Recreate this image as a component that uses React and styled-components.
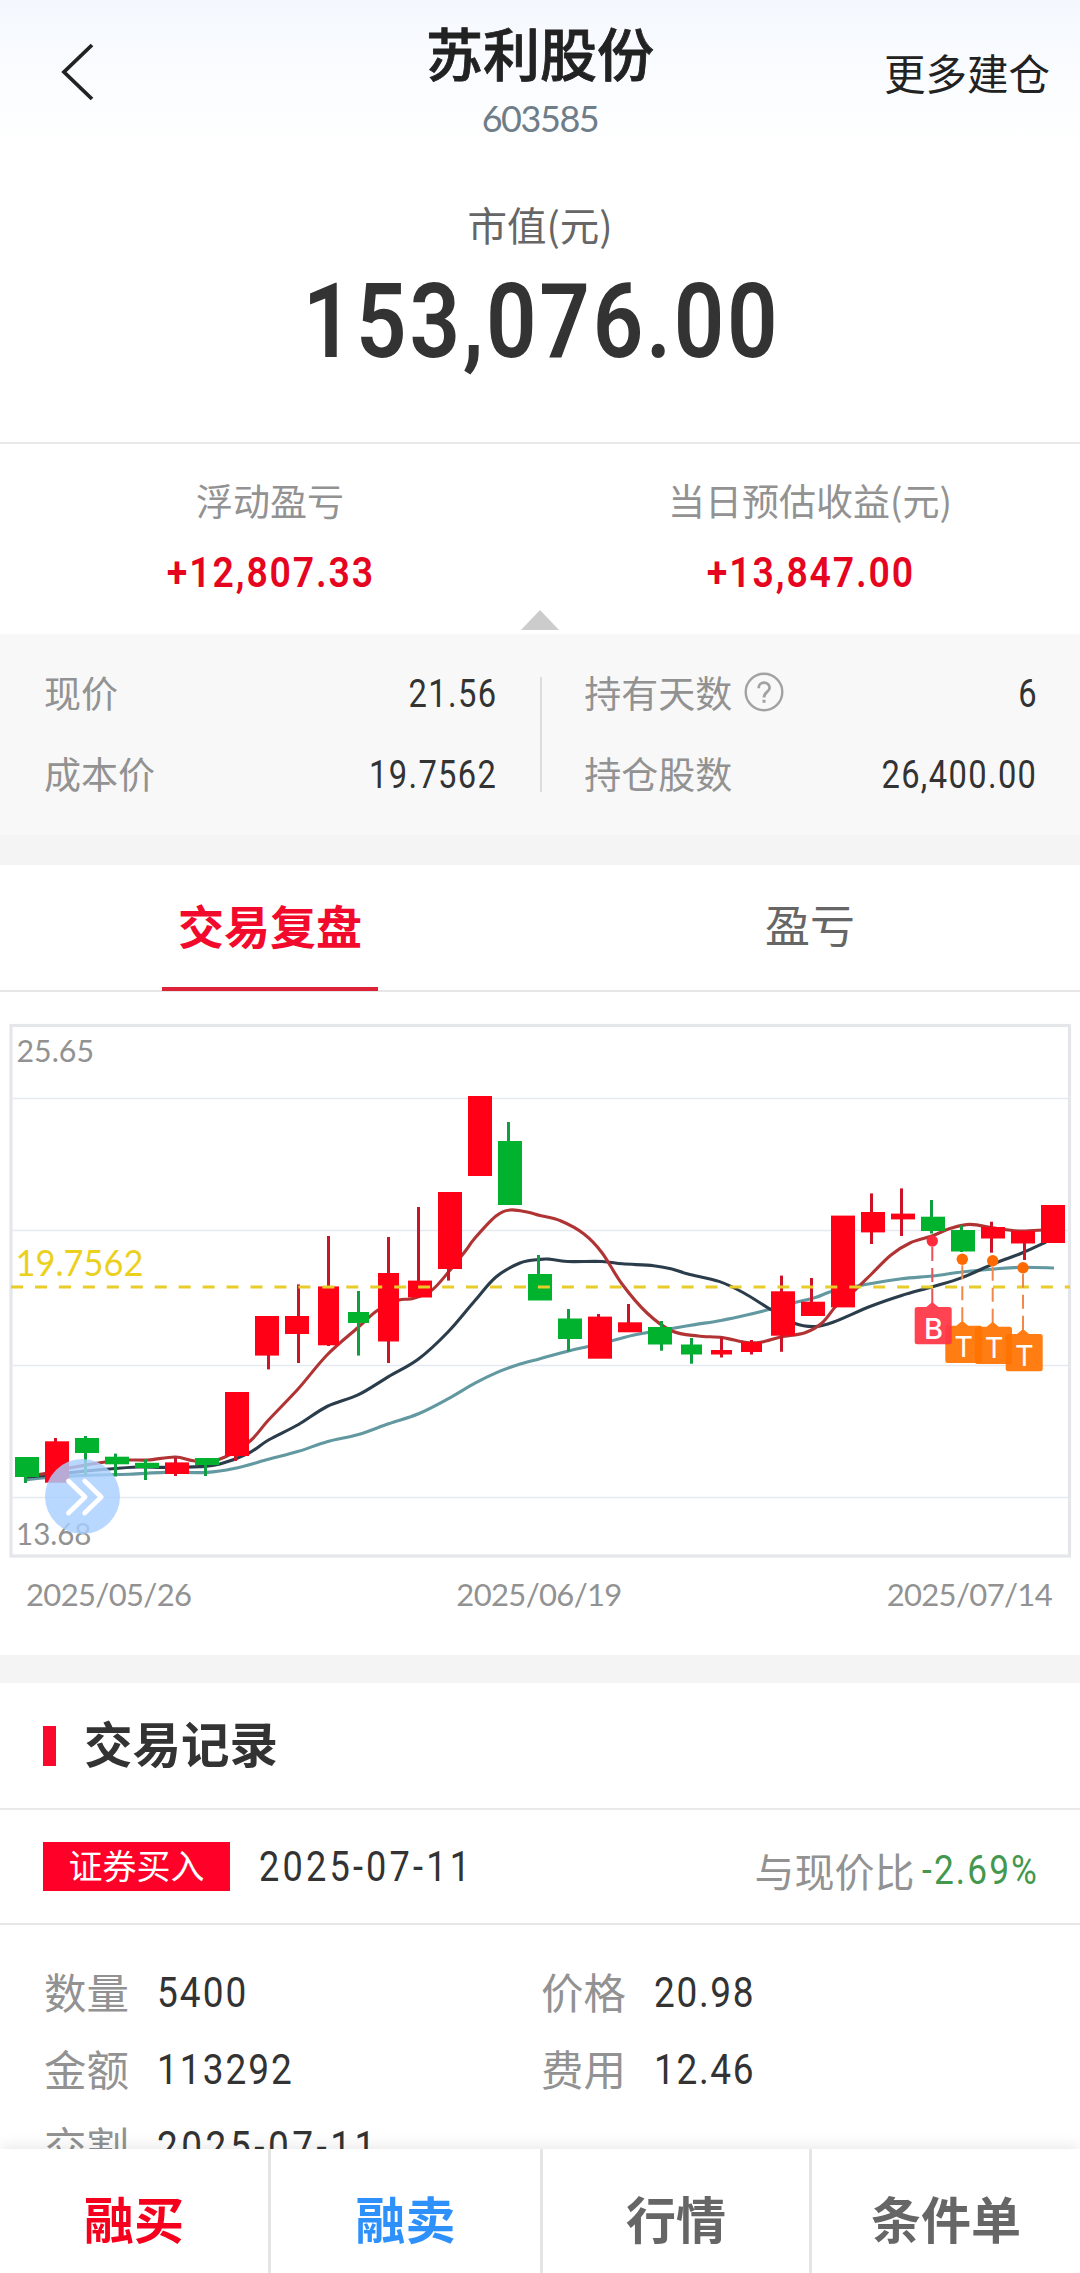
import React from 'react';
import styled, { createGlobalStyle } from 'styled-components';

const GlobalStyle = createGlobalStyle`
  * { box-sizing: border-box; }
  body {
    margin: 0;
    background: #fff;
    font-family: 'Noto Sans CJK SC', sans-serif;
    color: #333;
  }
`;

const Page = styled.main`
  display: flex;
  flex-direction: column;
  width: 1080px;
  height: 2273px;
  overflow: hidden;
  background: #fff;
`;

/* Condensed figures: narrowed glyphs with open tracking keep a DIN-like look. */
const Num = styled.span`
  display: inline-block;
  margin-right: ${(p) => -(p.$spacing ?? 0.042)}em;
  font-family: 'Roboto', 'Noto Sans CJK SC', sans-serif;
  font-size: ${(p) => p.$size || 38}px;
  font-weight: ${(p) => p.$weight || 400};
  line-height: 1;
  letter-spacing: ${(p) => p.$spacing ?? 0.042}em;
  color: ${(p) => p.$color || '#333'};
  white-space: nowrap;
  transform: scaleX(${(p) => p.$scale || 0.86});
  transform-origin: ${(p) => p.$origin || 'center'} center;
`;

/* ---------- header ---------- */
const Header = styled.header`
  display: grid;
  grid-template-columns: 300px 1fr 300px;
  height: 150px;
  background: linear-gradient(#f4f8fe, #fafcff 50%, #fff);
`;

const Back = styled.button`
  display: flex;
  align-items: center;
  height: 144px;
  padding: 0 0 0 58px;
  border: 0;
  background: none;
`;

const TitleBlock = styled.div`
  display: flex;
  flex-direction: column;
  align-items: center;
  padding-top: 20px;
`;

const Title = styled.h1`
  margin: 0 0 18px;
  font-size: 57px;
  font-weight: 500;
  line-height: 62px;
  color: #222;
  -webkit-text-stroke: 0.8px #222;
`;

const Code = styled.span`
  font-family: 'Lato', sans-serif;
  font-size: 36px;
  line-height: 36px;
  letter-spacing: -0.04em;
  color: #6f7d88;
`;

const More = styled.a`
  justify-self: end;
  padding: 42px 30px 0 0;
  font-size: 41.5px;
  line-height: 60px;
  color: #222;
`;

/* ---------- market value ---------- */
const Value = styled.section`
  display: flex;
  flex-direction: column;
  align-items: center;
  height: 294px;
  padding-top: 49px;
  border-bottom: 2px solid #e9e9e9;
`;

const ValueLabel = styled.div`
  margin-bottom: 21px;
  font-size: 39.5px;
  line-height: 50px;
  color: #666;
`;

const Profit = styled.section`
  position: relative;
  display: grid;
  grid-template-columns: 1fr 1fr;
  height: 190px;
  padding-top: 31px;
`;

const ProfitCell = styled.div`
  display: flex;
  flex-direction: column;
  align-items: center;
  gap: 27px;
  font-size: 37px;
  line-height: 50px;
  color: #929292;
`;

const Pointer = styled.i`
  position: absolute;
  left: 521px;
  bottom: 4px;
  border: 19px solid transparent;
  border-top: 0;
  border-bottom: 20px solid #ccc;
`;

/* ---------- position details ---------- */
const Details = styled.section`
  display: flex;
  height: 201px;
  padding: 33px 44px 0;
  background: #f8f8f8;
`;

const DetailColumn = styled.div`
  display: flex;
  flex-direction: column;
  gap: 31px;
  width: ${(p) => p.$width}px;
`;

const DetailRow = styled.div`
  display: flex;
  align-items: center;
  justify-content: space-between;
  height: 50px;
  font-size: 37px;
  line-height: 50px;
  color: #929292;

  > ${Num} {
    padding-top: 4px;
  }
`;

const DetailLabel = styled.span`
  display: flex;
  align-items: center;
  gap: 12px;
`;

const DetailRule = styled.div`
  width: 2.5px;
  height: 115px;
  margin: 10px 42px 0 44px;
  background: #ddd;
`;

const Band = styled.div`
  height: ${(p) => p.$height}px;
  background: #f4f4f4;
`;

/* ---------- tabs ---------- */
const Tabs = styled.nav`
  display: grid;
  grid-template-columns: 1fr 1fr;
  height: 127px;
  border-bottom: 2px solid #e6e6e6;
`;

const Tab = styled.div`
  display: flex;
  justify-content: center;
  justify-self: center;
  width: 216px;
  height: 126px;
  padding-top: 26px;
  font-size: ${(p) => (p.$active ? 46 : 45)}px;
  font-weight: ${(p) => (p.$active ? 700 : 400)};
  line-height: 66px;
  color: ${(p) => (p.$active ? '#f20a2c' : '#666')};
  border-bottom: 4px solid ${(p) => (p.$active ? '#dc2338' : 'transparent')};
`;

/* ---------- chart ---------- */
const ChartArea = styled.section`
  position: relative;
  height: 663px;
`;

const ChartSvg = styled.svg`
  display: block;
  width: 1080px;
  height: 566px;
`;

const AxisText = styled.text`
  font-family: 'Lato', sans-serif;
  font-size: ${(p) => p.$size || 31}px;
  fill: ${(p) => p.$fill || '#929292'};
`;

const FlagText = styled.text`
  font-family: 'Inter', sans-serif;
  font-size: 29px;
  font-weight: ${(p) => p.$weight};
  fill: #fff;
  text-anchor: middle;
`;

const Dates = styled.div`
  display: flex;
  justify-content: space-between;
  padding: 14px 28px 0 26px;
  font-family: 'Lato', sans-serif;
  font-size: 31px;
  line-height: 44px;
  letter-spacing: -0.65px;
  color: #929292;
`;

const Expand = styled.button`
  position: absolute;
  left: 45px;
  top: 467px;
  width: 75px;
  height: 75px;
  padding: 0;
  border: 0;
  border-radius: 50%;
  background: rgba(169, 207, 255, 0.82);
`;

/* ---------- records ---------- */
const RecordHead = styled.div`
  display: flex;
  align-items: center;
  gap: 28px;
  height: 127px;
  padding: 0 43px;
  border-bottom: 2px solid #e9e9e9;
`;

const RedBar = styled.i`
  width: 13px;
  height: 40px;
  background: #f90a2c;
`;

const RecordTitle = styled.h2`
  margin: 0 0 8px;
  font-size: 48.5px;
  font-weight: 700;
  line-height: 64px;
  color: #333;
`;

const RecordSummary = styled.div`
  display: flex;
  align-items: center;
  height: 115px;
  padding: 0 43px;
  border-bottom: 2px solid #e6e6e6;
`;

const Tag = styled.span`
  width: 187px;
  height: 49px;
  margin-right: 29px;
  background: #ff0029;
  color: #fff;
  font-size: 34px;
  line-height: 46px;
  text-align: center;
`;

const Compare = styled.span`
  display: flex;
  align-items: center;
  margin: 6px 0 0 auto;
  font-size: 40px;
  line-height: 56px;
  color: #929292;

  > ${Num} {
    margin-left: -11px;
    padding-top: 2px;
  }
`;

const RecordGrid = styled.div`
  display: grid;
  grid-template-columns: 497px 1fr;
  grid-auto-rows: 77.3px;
  flex: 1;
  min-height: 0;
  overflow: hidden;
  padding: 27px 44px 0;
`;

const Field = styled.div`
  display: flex;
  align-items: center;
  gap: 28px;
  font-size: 42.5px;
  line-height: 60px;
  color: #929292;

  > ${Num} {
    padding-top: 3px;
  }
`;

const Footer = styled.footer`
  position: relative;
  display: grid;
  grid-template-columns: 268px 272px 269px 271px;
  flex: none;
  height: 124px;
  background: #fff;
  box-shadow: 0 -3px 14px rgba(0, 0, 0, 0.09);
`;

const Action = styled.div`
  display: flex;
  justify-content: center;
  padding-top: 32px;
  font-size: 50px;
  font-weight: 700;
  line-height: 72px;
  color: ${(p) => p.$color || '#666'};
  border-left: ${(p) => (p.$first ? 0 : 3)}px solid #e5e5e5;
`;

/* Candle: body left, width, open/close edges, wick x, wick ends, rising flag. */
const CANDLES = [
  [15, 24, 1457, 1477, 25.5, 1457, 1483, 0],
  [45, 24, 1441.3, 1482.7, 55.5, 1438, 1482, 1],
  [75, 24, 1438, 1453, 85.5, 1436, 1475, 0],
  [105, 24, 1456.7, 1464.3, 115.5, 1453.6, 1476.5, 0],
  [135, 24, 1462.8, 1468, 145.5, 1459.3, 1480, 0],
  [165, 24, 1462.4, 1474, 175.5, 1458, 1476, 1],
  [195, 24, 1458, 1465, 205.5, 1458, 1476, 0],
  [225, 24, 1392, 1456, 235.5, 1392, 1461, 1],
  [255, 24, 1316, 1355.6, 268.5, 1316, 1369.4, 1],
  [285, 24, 1316, 1334, 298.5, 1284.4, 1363, 1],
  [318, 21, 1286.4, 1345.3, 328.5, 1236, 1346, 1],
  [348, 21, 1312, 1323, 358.5, 1291, 1355.6, 0],
  [378, 21, 1273, 1341.5, 388.5, 1237, 1363, 1],
  [408, 24, 1280.6, 1297.5, 418.5, 1207, 1297, 1],
  [438, 24, 1192, 1269, 448.5, 1192, 1280.6, 1],
  [468, 24, 1096, 1176, 480, 1096, 1176, 1],
  [498, 24, 1141, 1205, 508.5, 1122, 1205, 0],
  [528, 24, 1274, 1300.5, 538.5, 1255, 1300, 0],
  [558, 24, 1318.5, 1339, 568.5, 1309, 1351.4, 0],
  [588, 24, 1316.6, 1358.7, 598.5, 1314, 1358, 1],
  [618, 24, 1322.3, 1332.3, 628.5, 1304, 1332, 1],
  [648, 24, 1327, 1344.5, 661.5, 1321, 1350.7, 0],
  [681, 21, 1344.5, 1354.5, 691.5, 1338, 1363.7, 0],
  [711, 21, 1350, 1354.5, 721.5, 1337.6, 1357.5, 1],
  [741, 21, 1342, 1352, 751.5, 1340, 1354.5, 1],
  [771, 24, 1291.3, 1335.7, 781.5, 1275.6, 1351.8, 1],
  [801, 24, 1301.7, 1316, 811.5, 1278, 1316, 1],
  [831, 24, 1215.6, 1307.4, 843, 1216, 1307, 1],
  [861, 24, 1212, 1232.4, 871.5, 1193.4, 1244, 1],
  [891, 24, 1213.6, 1219.4, 901.5, 1188.4, 1236, 1],
  [921, 24, 1216.7, 1231, 931.5, 1200, 1233.5, 0],
  [951, 24, 1230, 1251.5, 961.5, 1225.5, 1252, 0],
  [981, 24, 1227, 1238.5, 991.5, 1221.7, 1252.7, 1],
  [1011, 24, 1231, 1243.5, 1024.5, 1231, 1260, 1],
  [1041, 24, 1205, 1243, 1053, 1205, 1243, 1],
];

const SHORT_MA = [25.5,1476,45,1473.5,69,1468,105,1462,129,1460,148,1460,175.5,1457,195,1461,220,1459,249,1442,268.5,1420,298.5,1388.5,327,1355,358.5,1327,378,1310,399,1300,413,1298.6,432,1290,448.5,1272,465,1251.5,475,1238,496,1216,510,1210,527,1212,540,1215.5,561,1221,584,1234,602,1252.7,622,1284,647,1313,672,1331,698,1336,722.5,1337.6,747,1342.6,762,1342,781,1337,805,1332.7,822,1323,837,1305,855,1290,871,1274.5,891,1255,910,1243,932,1236,950,1228.6,970,1224.4,994.5,1228,1019,1231,1043,1230];
const MID_MA = [25.5,1477,45,1475.5,69,1472.7,105,1469.3,138,1467,165,1467.4,200,1466.6,220,1464,249,1453,268.5,1440,298.5,1424.5,327,1406.5,358.5,1394.7,388.5,1376.7,418.5,1359,448,1332,475,1300.5,496,1277,520,1263,540,1259.4,550,1259.2,567.5,1261.5,602,1261.5,622.6,1263.8,653.6,1265.7,671,1268.8,688,1274,719,1281.4,743,1292.5,770,1309,795,1323.5,815.5,1326.5,833,1322.3,870.6,1306.3,901.6,1295.5,932.6,1286.7,962,1277.6,994.5,1263.4,1022,1253,1046,1242];
const LONG_MA = [25.5,1480,45,1477.7,85.5,1475.4,129,1474.3,165,1472.4,206.6,1472.4,234,1468.5,268.5,1459.3,298.5,1451.3,327,1441.7,358.5,1434.5,388.5,1423.8,418.5,1413.8,448,1398.9,475,1383.2,496,1372.9,516.5,1365.2,540,1358.7,568.5,1351,588,1346.4,612,1340.7,636.4,1334.6,672,1328.5,695,1324.6,721,1320.4,746.6,1315,770,1309.3,795,1302.4,815.5,1297.5,833,1291,864,1284.8,901.6,1278.7,932.6,1276,962,1272,994.5,1269,1023,1267.2,1054,1268];

/* Later trades first, so that earlier flags lie on top. */
const FLAGS = [
  { x: 1023, dot: 1267.7, left: 1005.7, top: 1334, letter: 'T' },
  { x: 992.7, dot: 1260.7, left: 975, top: 1326.7, letter: 'T' },
  { x: 962.3, dot: 1259.3, left: 945.3, top: 1325.7, letter: 'T' },
  { x: 932.3, dot: 1241, left: 914.7, top: 1307, letter: 'B' },
];

function smooth(flat) {
  const pts = [];
  for (let i = 0; i < flat.length; i += 2) pts.push([flat[i], flat[i + 1]]);
  let d = `M${pts[0]}`;
  for (let i = 0; i < pts.length - 1; i += 1) {
    const a = pts[i - 1] || pts[i];
    const b = pts[i];
    const c = pts[i + 1];
    const e = pts[i + 2] || c;
    d += `C${b[0] + (c[0] - a[0]) / 6},${b[1] + (c[1] - a[1]) / 6} ${c[0] - (e[0] - b[0]) / 6},${c[1] - (e[1] - b[1]) / 6} ${c[0]},${c[1]}`;
  }
  return d;
}

function Chart() {
  return (
    <ChartSvg viewBox="0 992 1080 566" fill="none">
      <rect x="11" y="1025.5" width="1058.5" height="530.5" stroke="#e5e6ea" strokeWidth="3.2" />
      {[1098.5, 1230.5, 1365.5, 1497.5].map((y) => (
        <path key={y} d={`M12.5 ${y}H1068`} stroke="#e6e9f1" strokeWidth="1.3" />
      ))}
      <AxisText x="16.5" y="1061.5" textLength="77.5" lengthAdjust="spacingAndGlyphs">25.65</AxisText>
      <AxisText x="16" y="1545" textLength="75.5" lengthAdjust="spacingAndGlyphs">13.68</AxisText>
      <g strokeWidth="3.1">
        <path d={smooth(LONG_MA)} stroke="#6299a0" />
        <path d={smooth(MID_MA)} stroke="#2b3d4b" />
        <path d={smooth(SHORT_MA)} stroke="#b03434" />
      </g>
      {CANDLES.map(([x, w, top, bottom, wick, high, low, up]) => (
        <g key={x}>
          <path d={`M${wick} ${high}V${low}`} stroke={up ? '#cc1428' : '#0f9f40'} strokeWidth="3" />
          <rect x={x} y={top} width={w} height={bottom - top} fill={up ? '#ff0016' : '#00b22d'} />
        </g>
      ))}
      <path d="M11 1287H1070" stroke="#e8cc28" strokeWidth="3" strokeDasharray="12 11.95" />
      <AxisText
        x="15.5" y="1275.5" $size={36.5} $fill="#ecd01e"
        textLength="128" lengthAdjust="spacingAndGlyphs"
      >
        19.7562
      </AxisText>
      {FLAGS.map(({ x, dot, left, top, letter }) => {
        const buy = letter === 'B';
        const fill = buy ? '#ff3545' : '#ff7300';
        return (
          <g key={x}>
            <path
              d={`M${x} ${dot + 6}V${top - 4}`}
              stroke={buy ? '#e8505a' : '#f0884a'}
              strokeWidth="2"
              strokeDasharray="14 7"
            />
            <circle cx={x} cy={dot} r="5.7" fill={buy ? '#ff2a3c' : '#ff6a00'} />
            <g fill={fill} opacity="0.93">
              <path
                d={`M${left + 2.5} ${top}H${x - 6}L${x} ${top - 5}L${x + 6} ${top}H${left + 34.5}q2.5 0 2.5 2.5v32.2q0 2.5 -2.5 2.5H${left + 2.5}q-2.5 0 -2.5 -2.5v-32.2q0 -2.5 2.5 -2.5z`}
              />
            </g>
            <FlagText x={x + 1.3} y={top + 31.5} $weight={buy ? 500 : 400}>{letter}</FlagText>
          </g>
        );
      })}
    </ChartSvg>
  );
}

export default function App() {
  return (
    <Page>
      <GlobalStyle />
      <Header>
        <Back aria-label="返回">
          <svg width="38" height="60" viewBox="0 0 38 60" fill="none">
            <path d="M34 3L6 30L34 57" stroke="#222" strokeWidth="3.8" />
          </svg>
        </Back>
        <TitleBlock>
          <Title>苏利股份</Title>
          <Code>603585</Code>
        </TitleBlock>
        <More>更多建仓</More>
      </Header>

      <Value>
        <ValueLabel>市值(元)</ValueLabel>
        <Num $size={103} $weight={600} $scale={0.86} $spacing={0.03}>153,076.00</Num>
      </Value>

      <Profit>
        <ProfitCell>
          浮动盈亏
          <Num $size={42} $weight={600} $scale={0.89} $spacing={0.05} $color="#e60520">+12,807.33</Num>
        </ProfitCell>
        <ProfitCell>
          当日预估收益(元)
          <Num $size={42} $weight={600} $scale={0.89} $spacing={0.05} $color="#e60520">+13,847.00</Num>
        </ProfitCell>
        <Pointer />
      </Profit>

      <Details>
        <DetailColumn $width={452}>
          <DetailRow>现价<Num $origin="right">21.56</Num></DetailRow>
          <DetailRow>成本价<Num $origin="right">19.7562</Num></DetailRow>
        </DetailColumn>
        <DetailRule />
        <DetailColumn $width={452}>
          <DetailRow>
            <DetailLabel>
              持有天数
              <svg width="40" height="40" viewBox="0 0 40 40" fill="none" stroke="#a2a2a2">
                <circle cx="20" cy="20" r="18.3" strokeWidth="2.4" />
                <path d="M14.6 16.2C14.6 8.8 25.6 9 25.6 15.8C25.6 20 20 19.8 20 25.4" strokeWidth="2.8" />
                <path d="M20 27.8V30.8" strokeWidth="3" />
              </svg>
            </DetailLabel>
            <Num $origin="right">6</Num>
          </DetailRow>
          <DetailRow>持仓股数<Num $origin="right">26,400.00</Num></DetailRow>
        </DetailColumn>
      </Details>
      <Band $height={30} />

      <Tabs>
        <Tab $active>交易复盘</Tab>
        <Tab>盈亏</Tab>
      </Tabs>

      <ChartArea>
        <Chart />
        <Expand aria-label="展开">
          <svg width="75" height="75" viewBox="0 0 75 75" fill="none">
            <path
              d="M23.5 22L40 38L23.5 54M39.7 22L56.2 38L39.7 54"
              stroke="#fff" strokeWidth="4.8" strokeLinecap="round" strokeLinejoin="round"
            />
          </svg>
        </Expand>
        <Dates>
          <span>2025/05/26</span>
          <span>2025/06/19</span>
          <span>2025/07/14</span>
        </Dates>
      </ChartArea>
      <Band $height={28} />

      <RecordHead>
        <RedBar />
        <RecordTitle>交易记录</RecordTitle>
      </RecordHead>
      <RecordSummary>
        <Tag>证券买入</Tag>
        <Num $size={42} $origin="left" $spacing={0.088}>2025-07-11</Num>
        <Compare>
          与现价比
          <Num $size={41} $color="#43984d" $origin="right" $spacing={0.06}>-2.69%</Num>
        </Compare>
      </RecordSummary>
      <RecordGrid>
        <Field>数量<Num $size={43} $origin="left" $spacing={0.055}>5400</Num></Field>
        <Field>价格<Num $size={43} $origin="left" $spacing={0.045}>20.98</Num></Field>
        <Field>金额<Num $size={43} $origin="left" $spacing={0.055}>113292</Num></Field>
        <Field>费用<Num $size={43} $origin="left" $spacing={0.045}>12.46</Num></Field>
        <Field>交割<Num $size={43} $origin="left" $spacing={0.095}>2025-07-11</Num></Field>
      </RecordGrid>

      <Footer>
        <Action $first $color="#f5001d">融买</Action>
        <Action $color="#2e90fa">融卖</Action>
        <Action>行情</Action>
        <Action>条件单</Action>
      </Footer>
    </Page>
  );
}
